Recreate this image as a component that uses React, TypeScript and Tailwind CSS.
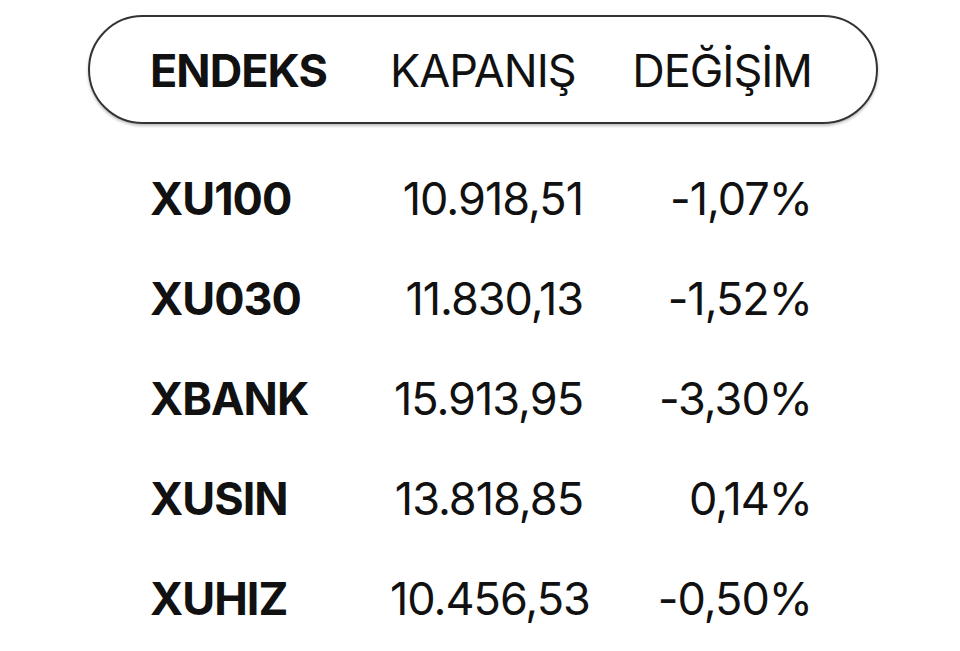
export default function App() {
  const rows = [
    ["XU100", "10.918,51", "-1,07%"],
    ["XU030", "11.830,13", "-1,52%"],
    ["XBANK", "15.913,95", "-3,30%"],
    ["XUSIN", "13.818,85", "0,14%"],
    ["XUHIZ", "10.456,53", "-0,50%"],
  ];
  return (
    <div className="w-[960px] h-[651px] bg-white text-[#111] overflow-hidden" style={{ fontFamily: "Inter, 'Noto Sans', sans-serif" }}>
      <div className="pt-[15px] pl-[88px]">
        <div className="w-[790px] h-[109px] rounded-full border-2 border-[#333] shadow-[0_2px_3px_rgba(0,0,0,0.25)] grid grid-cols-[240px_193px_229px] items-center pl-[60px] pt-[3px] text-[45px] tracking-[-1px]">
          <div className="font-bold">ENDEKS</div>
          <div className="font-normal">KAPANIŞ</div>
          <div className="font-normal text-right">DEĞİŞİM</div>
        </div>
      </div>
      <div className="pl-[150px] pt-[25px] flex flex-col">
        {rows.map((r) => (
          <div key={r[0]} className="grid grid-cols-[240px_193px_229px] items-center h-[100px] text-[45px] tracking-[-1px]">
            <div className="font-bold">{r[0]}</div>
            <div className="text-right">{r[1]}</div>
            <div className="text-right">{r[2]}</div>
          </div>
        ))}
      </div>
    </div>
  );
}
